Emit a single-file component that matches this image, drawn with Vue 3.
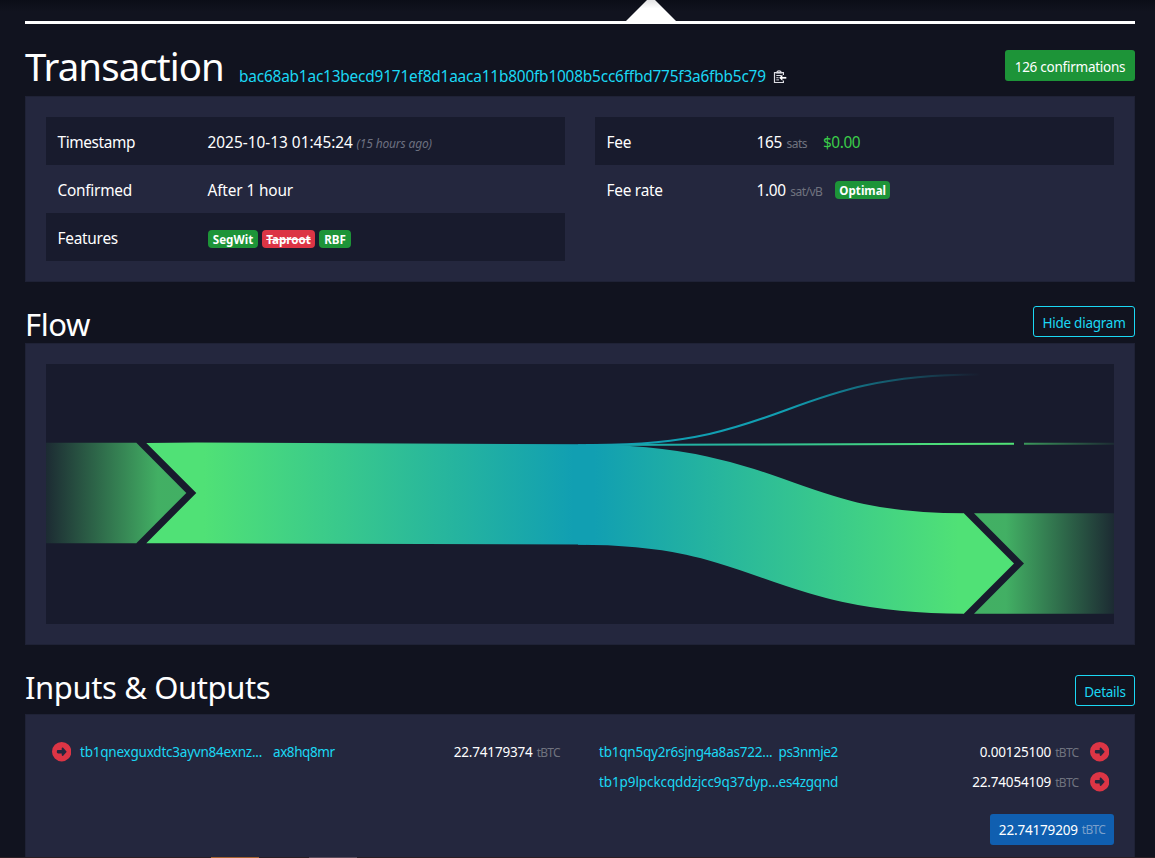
<script setup>
const txid = 'bac68ab1ac13becd9171ef8d1aaca11b800fb1008b5cc6ffbd775f3a6fbb5c79'
const inputs = [
  { id: 'in-a', head: 'tb1qnexguxdtc3ayvn84exnz...', tail: 'ax8hq8mr', value: '22.74179374' },
]
const outputs = [
  { id: 'out-a', head: 'tb1qn5qy2r6sjng4a8as722...', tail: 'ps3nmje2', value: '0.00125100' },
  { id: 'out-b', head: 'tb1p9lpckcqddzjcc9q37dyp...', tail: 'es4zgqnd', value: '22.74054109' },
]
const circleRight =
  'M0 256a256 256 0 1 0 512 0A256 256 0 1 0 0 256zM294.6 151.2c-4.2-4.6-10.1-7.2-16.4-7.2C266 144 256 154 256 166.3l0 41.7-96 0c-17.7 0-32 14.3-32 32l0 32c0 17.7 14.3 32 32 32l96 0 0 41.7c0 12.3 10 22.3 22.3 22.3c6.2 0 12.1-2.6 16.4-7.2l84-91c3.5-3.8 5.4-8.7 5.4-13.9s-1.9-10.1-5.4-13.9l-84-91z'
</script>

<template>
  <div class="page">
    <div class="blocks">
      <svg class="pointer" width="52" height="21" viewBox="0 0 52 21">
        <defs>
          <linearGradient id="tip" x1="0" y1="0" x2="0" y2="1">
            <stop offset="0" stop-color="#d4d4d6" />
            <stop offset="0.5" stop-color="#fff" />
          </linearGradient>
        </defs>
        <path d="M26 -4L51 21H1z" fill="url(#tip)" />
      </svg>
    </div>

    <header class="title-row first">
      <h1>Transaction</h1>
      <a class="txid">{{ txid }}</a>
      <svg class="clip" width="14" height="14" viewBox="0 0 14 14" fill="none" stroke="#dcdce2">
        <path d="M10.4 5V2.6H1.5V12.5H10.4V10.6" stroke-width="1.2" />
        <path d="M3.8 3C3.8 .2 8.2 .2 8.2 3z" stroke-width="1.1" />
        <path d="M3.3 5.5H8.6M3.3 7.7H5.6M3.3 9.9H6" stroke-width="1" />
        <path d="M13.3 7.8H8" stroke-width="1.7" stroke="#fff" />
        <path d="M9.4 4.8L6.2 7.8L9.4 10.8z" fill="#fff" stroke="none" />
      </svg>
      <button class="btn green">126 confirmations</button>
    </header>

    <section class="panel details">
      <div class="table">
        <div class="row">
          <span class="label ls3">Timestamp</span>
          <span>2025-10-13 01:45:24</span><i class="ago">(15 hours ago)</i>
        </div>
        <div class="row"><span class="label">Confirmed</span><span class="ls1">After 1 hour</span></div>
        <div class="row">
          <span class="label">Features</span>
          <span class="badge seg">SegWit</span>
          <span class="badge tap"><s>Taproot</s></span>
          <span class="badge rbf">RBF</span>
        </div>
      </div>
      <div class="table">
        <div class="row">
          <span class="label">Fee</span><span class="num">165</span><span class="unit">sats</span>
          <span class="fiat">$0.00</span>
        </div>
        <div class="row">
          <span class="label">Fee rate</span><span class="num">1.00</span><span class="unit">sat/vB</span>
          <span class="badge opt">Optimal</span>
        </div>
      </div>
    </section>

    <header class="title-row flow-title">
      <h2>Flow</h2>
      <button class="btn outline hide">Hide diagram</button>
    </header>

    <section class="panel flow">
      <svg class="diagram" width="1068" height="260" viewBox="0 0 1068 260">
        <defs>
          <linearGradient id="g-in" gradientUnits="userSpaceOnUse" x1="158" y1="0" x2="527" y2="0">
            <stop offset="0" stop-color="#50e176" />
            <stop offset="1" stop-color="#119fb2" />
          </linearGradient>
          <linearGradient id="g-out" gradientUnits="userSpaceOnUse" x1="548" y1="0" x2="912" y2="0">
            <stop offset="0" stop-color="#119fb2" />
            <stop offset="1" stop-color="#50e176" />
          </linearGradient>
          <linearGradient id="g-fee" gradientUnits="userSpaceOnUse" x1="548" y1="0" x2="935" y2="0">
            <stop offset="0" stop-color="#119fb2" />
            <stop offset="0.5" stop-color="#119fb2" />
            <stop offset="1" stop-color="#119fb2" stop-opacity="0" />
          </linearGradient>
          <linearGradient id="g-left" gradientUnits="userSpaceOnUse" x1="0" y1="0" x2="112" y2="0">
            <stop offset="0" stop-color="#50e176" stop-opacity="0.08" />
            <stop offset="1" stop-color="#50e176" stop-opacity="0.75" />
          </linearGradient>
          <linearGradient id="g-right" gradientUnits="userSpaceOnUse" x1="960" y1="0" x2="1068" y2="0">
            <stop offset="0" stop-color="#50e176" stop-opacity="0.75" />
            <stop offset="1" stop-color="#50e176" stop-opacity="0.08" />
          </linearGradient>
        </defs>
        <path d="M0 78.7H90.3L140.3 128.9L90.3 179.2H0z" fill="url(#g-left)" />
        <path d="M100.3 78.9L150 78.6L540 80.2V180.6L150 179.3H100.3L150.3 128.9z" fill="url(#g-in)" />
        <path d="M532 130.5C730 130.5 730 199.5 918 199.5" fill="none" stroke="url(#g-out)" stroke-width="100.4" />
        <path d="M917.8 149.3L968 199.5L917.8 249.7z" fill="url(#g-out)" />
        <path d="M540 80.9H550C741 80.9 741 10.5 932 10.5H950" fill="none" stroke="url(#g-fee)" stroke-width="2" />
        <path d="M540 81C700 81 760 79.8 968 79.7" fill="none" stroke="url(#g-out)" stroke-width="2" />
        <path d="M978 78.7H1068V80.7H978z" fill="url(#g-right)" />
        <path d="M928 149.3H1068V249.7H928L978 199.5z" fill="url(#g-right)" />
      </svg>
    </section>

    <header class="title-row io-title">
      <h2 class="io-h">Inputs &amp; Outputs</h2>
      <button class="btn outline det">Details</button>
    </header>

    <section class="panel io">
      <div class="col ins">
        <div v-for="r in inputs" :key="r.id" class="io-row">
          <svg class="dot" viewBox="0 0 512 512"><path fill-rule="evenodd" :d="circleRight" /></svg>
          <a class="addr" :class="r.id"><span class="head">{{ r.head }}</span><span class="tail">{{ r.tail }}</span></a>
          <span class="amount">{{ r.value }}</span><span class="unit">tBTC</span>
        </div>
      </div>
      <div class="col outs">
        <div v-for="r in outputs" :key="r.id" class="io-row">
          <a class="addr" :class="r.id"><span class="head">{{ r.head }}</span><span class="tail">{{ r.tail }}</span></a>
          <span class="amount">{{ r.value }}</span><span class="unit">tBTC</span>
          <svg class="dot" viewBox="0 0 512 512"><path fill-rule="evenodd" :d="circleRight" /></svg>
        </div>
        <button class="btn total"><span class="amount">22.74179209</span><span class="unit">tBTC</span></button>
      </div>
    </section>
    <footer class="strip"><span class="seg-a"></span><span class="seg-b"></span></footer>
  </div>
</template>

<style>
html,
body {
  background: #11131f;
  margin: 0;
  overflow: hidden;
}
</style>

<style scoped>
.page {
  box-sizing: border-box;
  width: 1155px;
  height: 858px;
  padding: 0 20px 0 25px;
  overflow: hidden;
  display: flex;
  flex-direction: column;
  background: linear-gradient(#0b0d17, #11131f 12px);
  color: #fff;
  font: 15.4px 'Noto Sans', 'Open Sans', sans-serif;
  white-space: nowrap;
}
.blocks {
  box-sizing: border-box;
  height: 24px;
  flex: none;
  border-bottom: 3px solid #fff;
  padding-left: 600px;
}
.pointer {
  display: block;
}
.title-row {
  display: flex;
  flex: none;
  align-items: flex-start;
}
.first {
  height: 72px;
}
.flow-title {
  height: 61px;
}
.io-title {
  height: 69px;
}
h1,
h2 {
  margin: 0;
  font-weight: 400;
}
h1 {
  font-size: 38.4px;
  line-height: 46px;
  letter-spacing: -0.9px;
  padding-top: 19px;
  width: 214px;
}
h2 {
  font-size: 31px;
  line-height: 38px;
  letter-spacing: -0.4px;
  padding-top: 23px;
}
.txid {
  color: #1bd8f4;
  letter-spacing: -0.19px;
  line-height: 24px;
  padding-top: 41px;
  width: 534px;
}
.clip {
  margin-top: 46px;
}
.btn {
  box-sizing: border-box;
  height: 31px;
  margin: 0 0 0 auto;
  padding: 1px 0 0;
  border: 1px solid transparent;
  border-radius: 3px;
  color: #fff;
  background: none;
  font: 13.5px/28px 'Noto Sans', 'Open Sans', sans-serif;
  letter-spacing: -0.25px;
  text-align: center;
}
.green {
  width: 130px;
  margin-top: 26px;
  padding-top: 2px;
  background: #1d9438;
}
.outline {
  border-color: #1bd8f4;
  color: #1bd8f4;
}
.hide {
  width: 102px;
  margin-top: 24px;
  padding-top: 2px;
}
.det {
  width: 60px;
  margin-top: 30px;
  padding-top: 2px;
}
.panel {
  box-sizing: border-box;
  flex: none;
  border: 1px solid #1f2236;
  background: #24273e;
  padding: 20px;
}
.details {
  height: 186px;
  display: flex;
  gap: 30px;
}
.table {
  flex: 1;
}
.row {
  box-sizing: border-box;
  height: 48px;
  padding: 3px 12px 0 11.5px;
  display: flex;
  align-items: center;
}
.row:nth-child(odd) {
  background: #181b2d;
}
.label {
  width: 150px;
  letter-spacing: -0.25px;
}
.ls3 {
  letter-spacing: -0.37px;
}
.ls1 {
  letter-spacing: -0.14px;
}
.num {
  letter-spacing: -0.3px;
}
.ago {
  color: #6c7080;
  font-size: 12px;
  letter-spacing: -0.15px;
  margin: 1px 0 0 3.5px;
}
.unit {
  color: #70737f;
  font-size: 12px;
  letter-spacing: -0.55px;
  margin: 1px 0 0 4.5px;
}
.fiat {
  color: #3bcc49;
  letter-spacing: -0.4px;
  margin-left: 16px;
}
.badge {
  box-sizing: border-box;
  height: 18px;
  margin-right: 4px;
  border-radius: 4px;
  background: #1d9438;
  font-size: 11.6px;
  font-weight: 700;
  line-height: 19px;
  text-align: center;
}
.seg {
  width: 50px;
  margin-left: 0.5px;
}
.tap {
  width: 53px;
  background: #dc3545;
}
.rbf {
  width: 32px;
}
.opt {
  width: 55px;
  margin: -2px 0 0 13px;
}
.flow {
  height: 302px;
}
.diagram {
  display: block;
  background: #181b2d;
}
.io {
  height: 143px;
  display: flex;
  justify-content: space-between;
  padding: 22px 20px 0;
  border-bottom: 0;
}
.col {
  display: flex;
  flex-direction: column;
  font-size: 13.5px;
}
.ins {
  width: 508px;
  padding-left: 6px;
}
.outs {
  width: 515px;
}
.io-row {
  height: 30px;
  display: flex;
  align-items: center;
}
.io-row .addr,
.io-row .amount {
  margin-top: -1px;
}
.dot {
  width: 19.4px;
  height: 19.4px;
  fill: #dc3545;
}
.addr {
  display: flex;
  color: #1bd8f4;
  letter-spacing: -0.22px;
}
.ins .addr {
  margin-left: 8.6px;
}
.in-a .head {
  width: 193px;
}
.out-a .head {
  width: 179.5px;
}
.out-b .head {
  width: 179.5px;
  letter-spacing: -0.1px;
}
.in-a .tail {
  letter-spacing: -0.42px;
}
.out-a .tail {
  letter-spacing: -0.35px;
}
.amount {
  margin-left: auto;
  letter-spacing: -0.17px;
}
.col .unit {
  margin: 0 0 0 4px;
  letter-spacing: -0.7px;
}
.outs .dot {
  margin: 0 4.6px 0 11.5px;
}
.total {
  display: flex;
  justify-content: center;
  align-items: center;
  width: 124px;
  margin-top: 17px;
  background: #105fb0;
}
.total .amount {
  margin-left: 0;
}
.total .unit {
  color: #7a9fcb;
}
.strip {
  height: 1px;
  flex: none;
  display: flex;
  gap: 50px;
  margin: 0 -20px 0 -25px;
  padding-left: 211px;
  background: #2b1f24;
}
.seg-a {
  width: 48px;
  background: #a5632f;
}
.seg-b {
  width: 48px;
  background: #5b4b58;
}
</style>
